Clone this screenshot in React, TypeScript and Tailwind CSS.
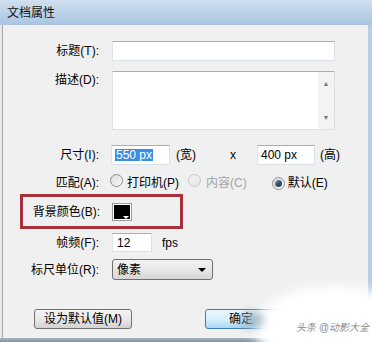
import React from "react";

const font = { fontFamily: '"Liberation Sans", "Noto Sans CJK SC", sans-serif' };

function Label({ children, w = "w-[98px]" }: { children: React.ReactNode; w?: string }) {
  return <div className={`${w} shrink-0 text-right pr-[1px] leading-none`}>{children}</div>;
}

function Radio({ checked, disabled }: { checked?: boolean; disabled?: boolean }) {
  return (
    <span
      className={`relative inline-flex h-[13px] w-[13px] shrink-0 items-center justify-center rounded-full border ${
        disabled ? "border-[#c4c4c4] bg-gradient-to-br from-[#f4f4f4] to-[#e6e6e6]" : "border-[#8e8f8f] bg-gradient-to-br from-[#dcdcdc] to-[#fbfbfb]"
      }`}
    >
      {checked && (
        <span className="h-[7px] w-[7px] rounded-full bg-gradient-to-br from-[#8fb3cf] via-[#30536e] to-[#1d3a52]" />
      )}
    </span>
  );
}

const inputCls = "h-full border border-[#dbdfe6] border-t-[#abadb3] border-l-[#e2e3ea] bg-white";

export default function App() {
  return (
    <div className="relative flex h-[342px] w-[372px] flex-col overflow-hidden bg-[#f0f0f0] text-[12px] text-black" style={font}>
      {/* title bar */}
      <div className="flex h-[25px] shrink-0 items-center bg-gradient-to-b from-[#d0e0f0] to-[#aac4e0] pl-[7px] pr-[4px]">
        <span className="text-[12px] leading-none text-[#111]">文档属性</span>
      </div>

      <div className="flex flex-1">
        <div className="w-[3px] shrink-0 border-r border-r-[#a9a9a9] bg-[#e8e8e8]" />
        <div className="flex flex-1 flex-col">
          {/* title */}
          <div className="mt-[16px] flex h-[20px] items-center">
            <Label w="w-[97px]">标题(T):</Label>
            <div className={`ml-[12px] w-[223px] ${inputCls}`} />
          </div>
          {/* description */}
          <div className="mt-[10px] flex h-[59px] items-start">
            <div className="pt-[3px]">
              <Label w="w-[97px]">描述(D):</Label>
            </div>
            <div className={`ml-[12px] flex w-[223px] justify-end ${inputCls}`}>
              <div className="flex w-[16px] flex-col items-center justify-between bg-[#f3f3f3] py-[8px]">
                <span className="text-[7px] leading-none text-[#7a7a7a]">▲</span>
                <span className="text-[7px] leading-none text-[#7a7a7a]">▼</span>
              </div>
            </div>
          </div>
          {/* size */}
          <div className="mt-[15px] flex h-[20px] items-center">
            <Label w="w-[97px]">尺寸(I):</Label>
            <div className={`ml-[11px] flex w-[59px] items-center pl-[3px] ${inputCls}`}>
              <span className="bg-[#3a8ee6] px-[1px] leading-[12px] text-white">550 px</span>
            </div>
            <span className="ml-[6px] leading-none">(宽)</span>
            <span className="ml-[34px] leading-none">x</span>
            <div className={`ml-[21px] flex w-[58px] items-center pl-[3px] ${inputCls}`}>
              <span className="leading-none">400 px</span>
            </div>
            <span className="ml-[5px] leading-none">(高)</span>
          </div>
          {/* match */}
          <div className="mt-[8px] flex h-[20px] items-center">
            <Label w="w-[97px]">匹配(A):</Label>
            <span className="ml-[10px]"><Radio /></span>
            <span className="ml-[4px] leading-none">打印机(P)</span>
            <span className="ml-[9px]"><Radio disabled /></span>
            <span className="ml-[5px] leading-none text-[#a3a3a3]">内容(C)</span>
            <span className="ml-[25px]"><Radio checked /></span>
            <span className="ml-[3px] leading-none">默认(E)</span>
          </div>
          {/* background color - highlighted */}
          <div className="ml-[17px] mt-[1px] flex h-[35px] w-[163px] items-center border-[3px] border-[#a8303a]">
            <Label w="w-[78px]">背景颜色(B):</Label>
            <div className="relative ml-[11px] h-[18px] w-[20px] border border-[#9a9a9a] bg-white p-[1px]">
              <div className="h-full w-full bg-black" />
              <span className="absolute bottom-[1px] right-[2px] h-0 w-0 border-x-[3px] border-t-[3px] border-x-transparent border-t-white" />
            </div>
          </div>
          {/* fps */}
          <div className="mt-[4px] flex h-[19px] items-center">
            <Label w="w-[97px]">帧频(F):</Label>
            <div className={`ml-[12px] flex w-[40px] items-center pl-[4px] ${inputCls}`}>
              <span className="leading-none">12</span>
            </div>
            <span className="ml-[10px] leading-none">fps</span>
          </div>
          {/* ruler */}
          <div className="mt-[7px] flex h-[21px] items-center">
            <Label w="w-[97px]">标尺单位(R):</Label>
            <div className="ml-[12px] flex h-full w-[101px] items-center justify-between rounded-[3px] border border-[#707070] bg-gradient-to-b from-[#f2f2f2] via-[#e8e8e8] to-[#d6d6d6] pl-[4px] pr-[6px]">
              <span className="leading-none">像素</span>
              <span className="h-0 w-0 border-x-[4px] border-t-[4px] border-x-transparent border-t-black" />
            </div>
          </div>
          {/* buttons */}
          <div className="mt-[29px] flex h-[20px] items-center">
            <button className="ml-[31px] flex h-full w-[98px] items-center justify-center rounded-[3px] border border-[#707070] bg-gradient-to-b from-[#f4f4f4] via-[#e9e9e9] to-[#d2d2d2] leading-none">
              设为默认值(M)
            </button>
            <button className="ml-[73px] flex h-full w-[98px] items-center justify-start rounded-[3px] border border-[#3c7fb1] bg-gradient-to-b from-[#eaf6fd] via-[#d9f0fc] to-[#a7d9f5] pl-[23px] leading-none">
              确定
            </button>
          </div>
        </div>
        <div className="w-[4px] shrink-0 bg-[#b7cee6]" />
      </div>
      <div className="h-[4px] shrink-0 bg-gradient-to-b from-[#a7b6c2] to-[#7d92a4]" />

      {/* watermark smear overlay */}
      <div className="pointer-events-none absolute left-[254px] top-[286px] h-[84px] w-[160px] rounded-[50%] bg-white blur-[6px]" />
      <div className="pointer-events-none absolute left-[240px] top-[312px] h-[16px] w-[24px] rounded-[50%] bg-[#8aa4b4] opacity-70 blur-[4px]" />
      <div className="pointer-events-none absolute left-[296px] top-[323px] text-[10px] italic leading-none text-[#8c8c8c]">头条 @动影大全</div>
    </div>
  );
}
